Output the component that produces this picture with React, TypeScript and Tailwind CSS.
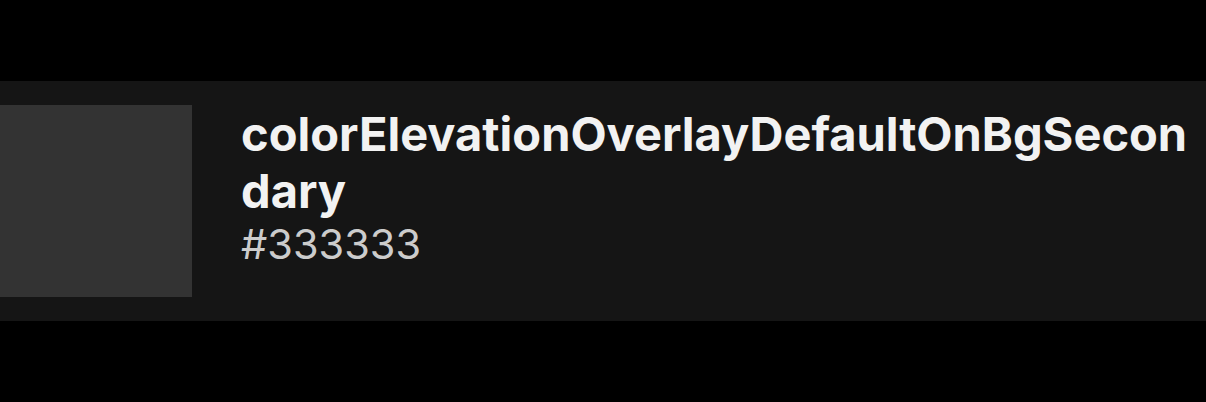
export default function App() {
  return (
    <div className="flex h-[402px] w-[1206px] flex-col justify-center bg-black font-['Inter',sans-serif]">
      <div className="flex h-[240px] items-start gap-[49px] bg-[#151515] py-6">
        <div className="size-[192px] shrink-0 bg-[#333333]" />
        <div className="min-w-0 flex-1 pr-2">
          <p className="break-all text-[47px] leading-[57px] font-bold text-[#f2f2f2]">
            colorElevationOverlayDefaultOnBgSecondary
          </p>
          <p className="text-[41.5px] leading-[51px] text-[#cccccc]">#333333</p>
        </div>
      </div>
    </div>
  );
}
